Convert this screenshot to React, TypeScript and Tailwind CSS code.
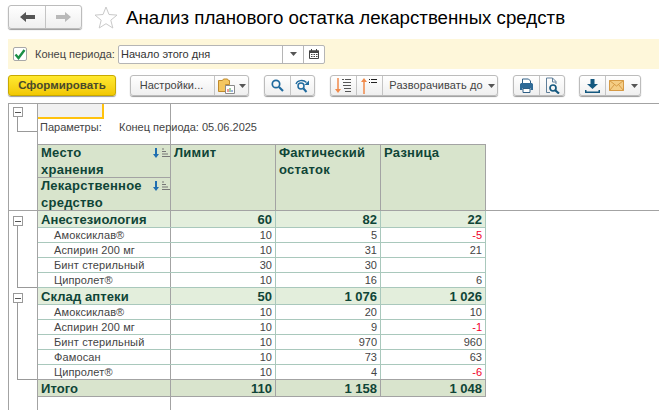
const arial = "font-['Liberation_Sans',Arial,sans-serif]";

const items1 = [
  ['Амоксиклав®', '10', '5', '-5'],
  ['Аспирин 200 мг', '10', '31', '21'],
  ['Бинт стерильный', '30', '30', ''],
  ['Ципролет®', '10', '16', '6'],
];

const items2 = [
  ['Амоксиклав®', '10', '20', '10'],
  ['Аспирин 200 мг', '10', '9', '-1'],
  ['Бинт стерильный', '10', '970', '960'],
  ['Фамосан', '10', '73', '63'],
  ['Ципролет®', '10', '4', '-6'],
];

function Caret() {
  return (
    <svg width="7" height="4" viewBox="0 0 7 4" className="shrink-0">
      <path d="M0 0h7L3.5 4z" fill="#555" />
    </svg>
  );
}

function Group({ children, className = '' }: { children: React.ReactNode; className?: string }) {
  return (
    <div className={`flex h-[21px] rounded-[3px] border border-[#bcbcbc] bg-linear-to-b from-white to-[#efefef] shadow-[0_1px_1px_#9a9a9a] ${className}`}>
      {children}
    </div>
  );
}

function Seg({ w, last, children }: { w: string; last?: boolean; children: React.ReactNode }) {
  return (
    <div className={`flex items-center justify-center gap-1 whitespace-nowrap ${w} ${last ? '' : 'border-r border-[#c4c4c4]'}`}>
      {children}
    </div>
  );
}

function SortIcon() {
  return (
    <svg width="17" height="11" viewBox="0 0 17 11">
      <path d="M2 0h2v6h2L3 10 0 6h2z" fill="#1f6fb0" />
      <path d="M9 1h2M9 3.500h4M9 6h6M9 8.500h8" stroke="#777" strokeWidth="1" fill="none" />
    </svg>
  );
}

function Tree({ h, pad = 'mt-[5px]' }: { h: string; pad?: string }) {
  return (
    <div className={`flex flex-col ${h}`}>
      <div className={`ml-1 h-[10px] w-[10px] shrink-0 border border-[#999] bg-white flex items-center justify-center ${pad}`}>
        <div className="h-px w-[6px] bg-[#555]" />
      </div>
      <div className="ml-2 flex-1 border-b border-l border-[#999]" />
    </div>
  );
}

function ItemRow({ row, line = 'border-[#a9c8bc]' }: { row: string[]; line?: string }) {
  return (
    <div className={`flex h-[15px] w-[448px] border-b ${line} text-[11px] leading-[14px] text-[#444]`}>
      <div className="w-[133px] border-r border-[#a3a3a3] pl-[16px] tracking-[0.12px]">{row[0]}</div>
      {row.slice(1).map((v, i) => (
        <div
          key={i}
          className={`w-[105px] border-r border-[#a9c8bc] pr-[3px] text-right ${v.startsWith('-') ? 'text-[#f0002a]' : ''}`}
        >
          {v}
        </div>
      ))}
    </div>
  );
}

function SumRow({ row, total }: { row: string[]; total?: boolean }) {
  const bg = total ? 'bg-[#d9e4cd]' : 'bg-[#e3eedc]';
  const line = total ? 'border-[#a3a3a3]' : 'border-[#a9c8bc]';
  return (
    <div className={`flex h-[17px] w-[448px] border-b ${line} ${bg} text-[13px] leading-[17px] font-bold text-[#0f4537]`}>
      <div className="w-[133px] border-r border-[#a3a3a3] pl-[3px] tracking-[0.1px]">{row[0]}</div>
      {row.slice(1).map((v, i) => (
        <div key={i} className={`w-[105px] border-r ${total ? 'border-[#a3a3a3]' : 'border-[#a9c8bc]'} pr-[3px] text-right`}>
          {v}
        </div>
      ))}
    </div>
  );
}

export default function App() {
  return (
    <div className={`flex h-[410px] w-[659px] flex-col overflow-hidden bg-white ${arial}`}>
      {/* Title */}
      <div className="flex h-[39px] items-start pt-[5px] pl-2">
        <Group className="h-[24px]">
          <Seg w="w-[37px]">
            <svg width="15" height="10" viewBox="0 0 15 10">
              <path d="M0 5l6-5v3h9v4H6v3z" fill="#555" />
            </svg>
          </Seg>
          <Seg w="w-[35px]" last>
            <svg width="15" height="10" viewBox="0 0 15 10">
              <path d="M15 5L9 0v3H0v4h9v3z" fill="#b9b9b9" />
            </svg>
          </Seg>
        </Group>
        <svg width="24" height="23" viewBox="0 0 24 23" className="mt-px ml-3">
          <path d="M12 1l3 7.500 8 .6-6.200 5.100 2 7.800L12 17.700 5.200 22l2-7.800L1 9.100l8-.6z" fill="none" stroke="#c9c9c9" />
        </svg>
        <h1 className="mt-px ml-[8px] text-[18.700px] leading-[24px] font-normal whitespace-nowrap text-black">
          Анализ планового остатка лекарственных средств
        </h1>
      </div>

      {/* Period band */}
      <div className="ml-2 flex h-[30px] items-center bg-[#fef7da] pl-[5px] text-[11px] text-[#444]">
        <div className="flex h-[14px] w-[14px] items-center justify-center rounded-[2px] border border-[#a8a8a8] bg-white">
          <svg width="12" height="11" viewBox="0 0 12 11">
            <path d="M1.500 5.500L4.500 9 10.500 1" fill="none" stroke="#1a8f45" strokeWidth="2.400" />
          </svg>
        </div>
        <span className="ml-2 w-[83px] shrink-0 whitespace-nowrap">Конец периода:</span>
        <div className="flex h-[19px] w-[207px] rounded-[2px] border border-[#b5b5b5] bg-white text-[#333]">
          <div className="flex-1 pl-[2px] leading-[17px]">Начало этого дня</div>
          <div className="flex w-[21px] items-center justify-center border-l border-[#b5b5b5]">
            <Caret />
          </div>
          <div className="flex w-[21px] items-center justify-center border-l border-[#b5b5b5]">
            <svg width="10" height="10" viewBox="0 0 10 10">
              <path d="M.5 2h9v7.500h-9z" fill="none" stroke="#444" />
              <path d="M0 1.500h10V4H0zM2 0h1v2H2zM7 0h1v2H7z" fill="#444" />
              <path d="M2 5.500h1.500M4.500 5.500H6M7 5.500h1.500M2 7.500h1.500M4.500 7.500H6M7 7.500h1.500" stroke="#444" />
            </svg>
          </div>
        </div>
      </div>

      {/* Toolbar */}
      <div className="mt-[6px] ml-2 flex h-[21px] text-[11px] text-[#444]">
        <button className="h-[21px] w-[108px] rounded-[3px] border border-[#c8a900] bg-linear-to-b from-[#ffe92e] to-[#f2c800] text-[11.500px] font-bold text-[#4a4a2a] shadow-[0_1px_1px_#9a9a9a]">
          Сформировать
        </button>
        <Group className="ml-[14px] w-[119px]">
          <Seg w="w-[84px]">
            <span className="mr-[2px] tracking-[0.05px]">Настройки...</span>
          </Seg>
          <Seg w="flex-1" last>
            <svg width="17" height="17" viewBox="0 0 17 17">
              <path d="M.5 3.500h4l1-1.500h4l1 1.500h1v4h-4v7h-7z" fill="#f4c660" stroke="#c08a2c" />
              <path d="M7.500 8.500h9v8h-9z" fill="#fff" stroke="#8a8a8a" />
              <path d="M10 15v-3" stroke="#d33" />
              <path d="M12 15v-4" stroke="#3a9a4a" />
              <path d="M14 15v-2" stroke="#3a6ac0" />
            </svg>
            <Caret />
          </Seg>
        </Group>
        <Group className="ml-[15px] w-[51px]">
          <Seg w="w-[26px]">
            <svg width="13" height="13" viewBox="0 0 13 13">
              <circle cx="5" cy="5" r="3.700" fill="none" stroke="#1f6a9e" strokeWidth="1.700" />
              <path d="M8 8l4 4" stroke="#1f6a9e" strokeWidth="2.200" />
            </svg>
          </Seg>
          <Seg w="flex-1" last>
            <svg width="15" height="14" viewBox="0 0 15 14">
              <circle cx="6" cy="7" r="3" fill="none" stroke="#1f6a9e" strokeWidth="1.500" />
              <path d="M8.500 9.500l3 3.500" stroke="#1f6a9e" strokeWidth="2" />
              <path d="M1 5C2 1.500 8 0 11.500 3.500" fill="none" stroke="#1f6a9e" strokeWidth="1.300" />
              <path d="M14 1.500v4.500H9.500z" fill="#1f6a9e" />
            </svg>
          </Seg>
        </Group>
        <Group className="ml-[15px] w-[168px]">
          <Seg w="w-[26px]">
            <svg width="17" height="16" viewBox="0 0 17 16">
              <path d="M3 0v12" stroke="#f08a4b" strokeWidth="1.500" />
              <path d="M0 11h6l-3 4z" fill="#f08a4b" />
              <path d="M7 1.500h2M10 1.500h6M8 4.500h8M8 7.500h8M9 10.500h7M10 13.500h6" stroke="#555" fill="none" />
            </svg>
          </Seg>
          <Seg w="w-[26px]">
            <svg width="17" height="16" viewBox="0 0 17 16">
              <path d="M3 3v13" stroke="#f08a4b" strokeWidth="1.500" />
              <path d="M0 4h6L3 0z" fill="#f08a4b" />
              <path d="M8 1.500h1M10 1.500h6M8 4.500h1M10 4.500h6" stroke="#222" />
            </svg>
          </Seg>
          <Seg w="flex-1" last>
            <span className="ml-[4px] tracking-[0.1px]">Разворачивать до</span>
            <span className="ml-[1px]"><Caret /></span>
          </Seg>
        </Group>
        <Group className="ml-[15px] w-[52px]">
          <Seg w="w-[26px]">
            <svg width="15" height="15" viewBox="0 0 15 15">
              <path d="M3.500 1h6L11.500 3v4h-8z" fill="#fff" stroke="#2f5f85" />
              <path d="M1 6.500C1 5.500 2 5 3 5h9c1 0 2 .5 2 1.500V12h-2.500v-2h-8v2H1z" fill="#2f6a96" />
              <path d="M4 10.500h7v4H4z" fill="#fff" stroke="#2f5f85" />
            </svg>
          </Seg>
          <Seg w="flex-1" last>
            <svg width="15" height="17" viewBox="0 0 15 17">
              <path d="M1.500 1h6L11 4.500V7M5 15.500H1.500V1" fill="none" stroke="#5f7f9a" />
              <path d="M7.500 1v4H11" fill="none" stroke="#5f7f9a" />
              <circle cx="8" cy="11" r="3" fill="none" stroke="#14587f" strokeWidth="1.700" />
              <path d="M10.500 13.500l3.500 3" stroke="#14587f" strokeWidth="2.200" />
            </svg>
          </Seg>
        </Group>
        <Group className="ml-[14px] w-[62px]">
          <Seg w="w-[26px]">
            <svg width="15" height="14" viewBox="0 0 15 14">
              <path d="M5.500 0h4v5H13L7.500 10 2 5h3.500z" fill="#14587f" />
              <path d="M0 11h1.500v1.500h12V11H15v3H0z" fill="#14587f" />
            </svg>
          </Seg>
          <Seg w="flex-1" last>
            <svg width="15" height="11" viewBox="0 0 15 11">
              <path d="M.5.500h14v10H.5z" fill="#f5cd85" stroke="#d69a45" />
              <path d="M.5.500l7 5.500 7-5.500M.5 10.500l5-6M14.500 10.500l-5-6" fill="none" stroke="#d69a45" />
            </svg>
            <span className="ml-[3px]"><Caret /></span>
          </Seg>
        </Group>
      </div>

      {/* Report sheet */}
      <div className="mt-[7px] ml-2 flex flex-1 flex-col border-t border-l border-[#a3a3a3]">
        <div className="flex border-b border-[#a3a3a3]">
          <div className="w-[29px] border-r border-[#a3a3a3]">
            <Tree h="h-[28px]" pad="mt-[3px]" />
          </div>
          <div className="flex flex-col">
            <div className="flex h-[40px] w-[133px] border-r border-[#a3a3a3]">
              <div className="flex w-full flex-col">
                <div className="h-[15px] w-[66px] border-r-2 border-b-2 border-[#ffc20e] bg-[#f1f1f1]" />
                <div className="mt-[1px] flex pl-[2px] text-[11px] leading-[14px] whitespace-nowrap text-[#444]">
                  <span className="w-[79px] shrink-0">Параметры:</span>
                  <span>Конец периода: 05.06.2025</span>
                </div>
              </div>
            </div>
            <div className="flex w-[448px] border-t border-[#a3a3a3] bg-[#d8e4cc] text-[13px] leading-[16.500px] font-bold text-[#0f4537]">
              <div className="flex w-[133px] flex-col border-r border-[#a3a3a3]">
                <div className="flex h-[33px] items-start justify-between border-b border-[#a3a3a3] pl-[3px]">
                  <span className="tracking-[0.25px]">Место<br />хранения</span>
                  <span className="mt-[3px]"><SortIcon /></span>
                </div>
                <div className="flex h-[32px] items-start justify-between pl-[3px]">
                  <span className="tracking-[0.25px]">Лекарственное<br />средство</span>
                  <span className="mt-[3px]"><SortIcon /></span>
                </div>
              </div>
              <div className="w-[105px] border-r border-[#a3a3a3] pl-[3px] tracking-[0.25px]">Лимит</div>
              <div className="w-[105px] border-r border-[#a3a3a3] pl-[3px] tracking-[0.25px]">Фактический<br />остаток</div>
              <div className="w-[105px] border-r border-[#a3a3a3] pl-[3px] tracking-[0.25px]">Разница</div>
            </div>
          </div>
        </div>

        <div className="flex flex-1">
          <div className="w-[29px] border-r border-[#a3a3a3]">
            <Tree h="h-[77px]" />
            <Tree h="h-[92px]" />
          </div>
          <div className="flex flex-col">
            <SumRow row={['Анестезиология', '60', '82', '22']} />
            {items1.map((r) => <ItemRow key={r[0]} row={r} />)}
            <SumRow row={['Склад аптеки', '50', '1 076', '1 026']} />
            {items2.map((r, i) => (
              <ItemRow key={r[0]} row={r} line={i === 4 ? 'border-[#a3a3a3]' : undefined} />
            ))}
            <SumRow row={['Итого', '110', '1 158', '1 048']} total />
            <div className="w-[133px] flex-1 border-r border-[#a3a3a3]" />
          </div>
        </div>
      </div>
    </div>
  );
}
